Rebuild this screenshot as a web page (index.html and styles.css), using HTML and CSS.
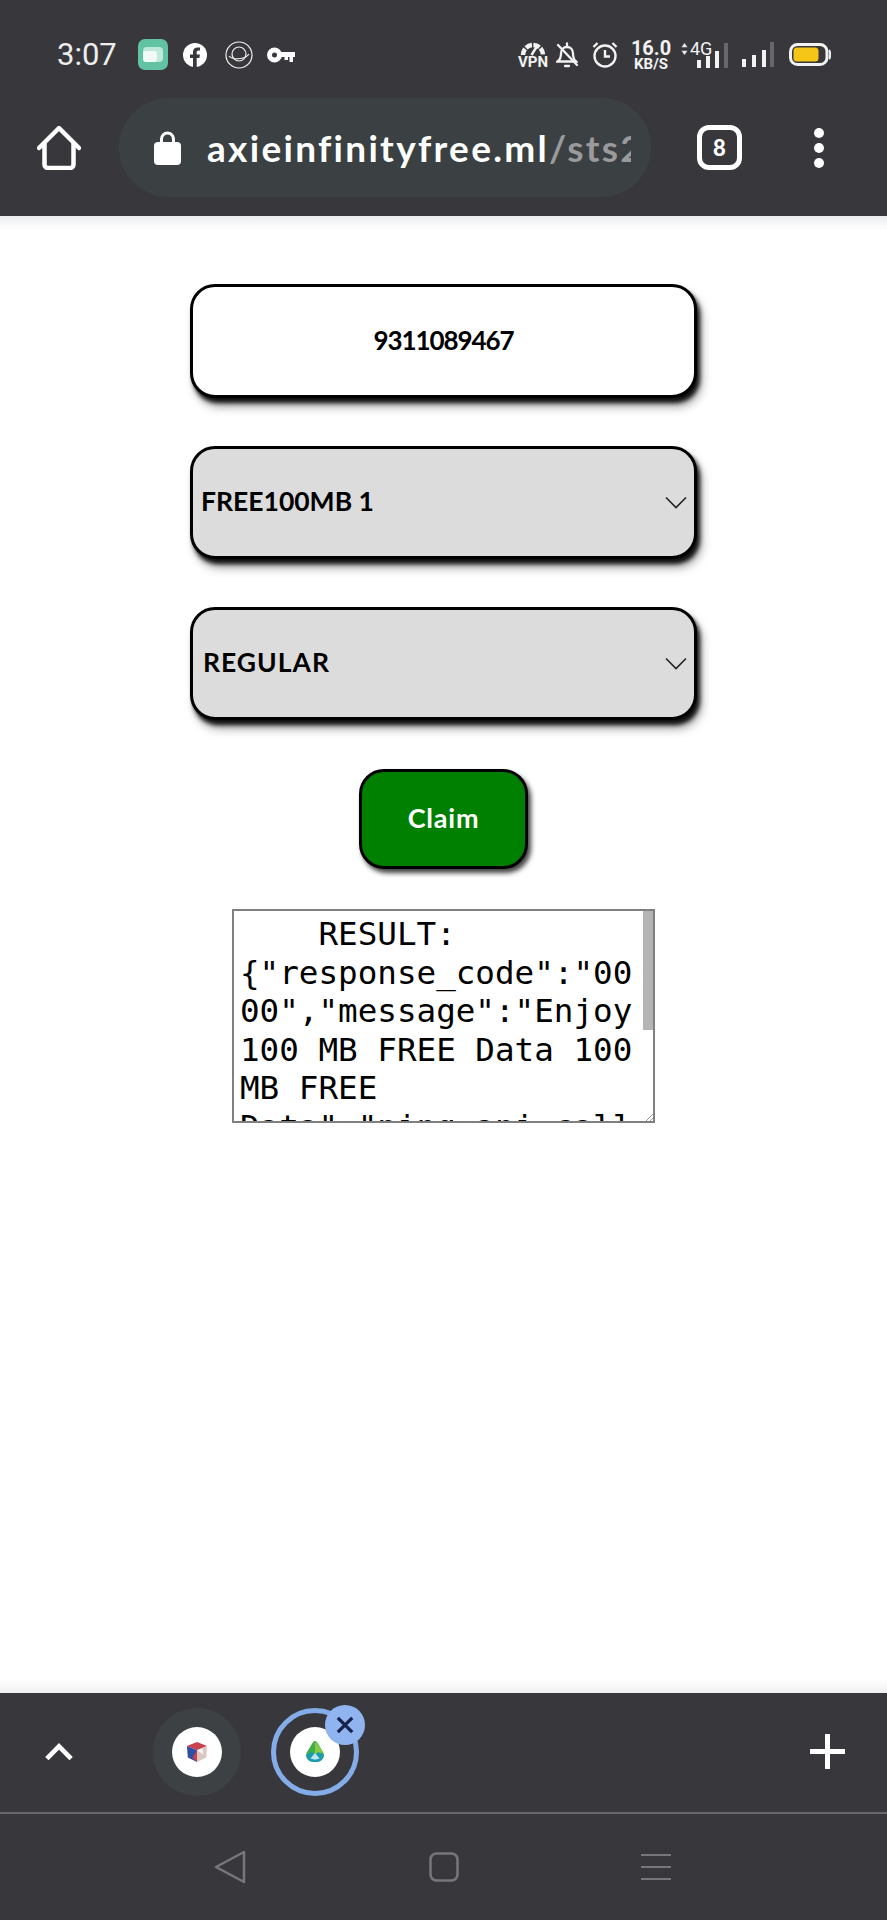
FILE: index.html
```html
<!DOCTYPE html>
<html lang="en">
<head>
<meta charset="utf-8">
<title>Claim</title>
<link rel="stylesheet" href="styles.css">
</head>
<body>
<div class="screen">
  <header class="chrome">
    <div class="status">
      <div class="status-left">
        <span class="time">3:07</span>
        <svg class="ic-msg" viewBox="0 0 30 31"><rect width="30" height="31" rx="7" fill="#62c3a2"/><rect x="5" y="8" width="20" height="15" rx="4" fill="#bfe9da"/><rect x="5" y="12" width="14" height="11" rx="3" fill="#f2fbf8"/></svg>
        <svg class="ic-fb" viewBox="0 0 24 24"><circle cx="12" cy="12" r="12" fill="#fff"/><path d="M10 24v-9H7v-3.500h3V9c0-3 1.800-4.600 4.500-4.600 1.200 0 2.500.2 2.500.2v3h-1.500c-1.400 0-1.800.9-1.800 1.800v2.100h3.200l-.5 3.500h-2.700v9z" fill="#38383c"/></svg>
        <svg class="ic-planet" viewBox="0 0 28 28" fill="none" stroke="#f2f2f2" stroke-width="1.200"><circle cx="14" cy="14" r="13"/><circle cx="14" cy="13" r="7"/><path d="M4 15c3 4 16 4 20-2"/></svg>
        <svg class="ic-key" viewBox="0 0 28 16"><circle cx="7.500" cy="8" r="5" fill="none" stroke="#fff" stroke-width="5"/><path d="M12 5h16v5h-2v5h-3.500v-5h-1.500v3h-3.500v-3H12z" fill="#fff"/></svg>
      </div>
      <div class="status-right">
        <div class="vpn">
          <svg class="ic-gauge" viewBox="0 0 26 15" fill="none" stroke="#f2f2f2"><path d="M3 14a10 10 0 0 1 20 0" stroke-width="4.500" stroke-dasharray="6.500 1.500"/><path d="M11.500 14l5-8" stroke-width="2.500"/></svg>
          <span class="vpn-label">VPN</span>
        </div>
        <svg class="ic-bell" viewBox="0 0 22 26" fill="none" stroke="#f2f2f2" stroke-width="2.300"><path d="M1.500 19.500c3-2 3.500-4 3.500-8 0-4 2.500-6.500 6-6.500s6 2.500 6 6.500c0 4 .5 6 3 8z"/><path d="M11 1.500v3M9 24h4M2 3l19 20" stroke-linecap="round"/></svg>
        <svg class="ic-alarm" viewBox="0 0 26 27" fill="none" stroke="#f2f2f2" stroke-width="2.400"><circle cx="13" cy="15" r="10.500"/><path d="M13 9v6.500h5M1.500 6l4-4M24.500 6l-4-4"/></svg>
        <div class="speed"><span class="speed-num">16.0</span><span class="speed-unit">KB/S</span></div>
        <div class="net">
          <span class="net-label"><svg class="ic-updown" viewBox="0 0 7 14"><path d="M3.500 0l3.500 5H0zM3.500 14L0 9h7z" fill="#e8e8e8"/></svg>4G</span>
          <svg class="ic-sig1" viewBox="0 0 31 25"><rect y="17" width="4" height="8" fill="#f2f2f2"/><rect x="9" y="13" width="4" height="12" fill="#f2f2f2"/><rect x="18" y="8" width="4" height="17" fill="#f2f2f2"/><rect x="27" width="4" height="25" fill="#68686c"/></svg>
        </div>
        <svg class="ic-sig2" viewBox="0 0 32 25"><rect y="17" width="4" height="8" fill="#f2f2f2"/><rect x="10" y="13" width="4" height="12" fill="#f2f2f2"/><rect x="20" y="8" width="4" height="17" fill="#f2f2f2"/><rect x="28" width="4" height="25" fill="#68686c"/></svg>
        <svg class="ic-batt" viewBox="0 0 42 23"><rect x="1.500" y="1.500" width="36.500" height="20" rx="7" fill="none" stroke="#f2f2f2" stroke-width="3"/><rect x="4.500" y="4.500" width="25" height="14" rx="3.500" fill="#f5c518"/><path d="M40 7c1.500 1 1.500 8 0 9" fill="none" stroke="#f2f2f2" stroke-width="2"/></svg>
      </div>
    </div>
    <div class="toolbar">
      <svg class="ic-home" viewBox="0 0 44 44" fill="none" stroke="#fff" stroke-width="4.500" stroke-linejoin="round" stroke-linecap="round"><path d="M2 22L22 2l20 20"/><path d="M7.500 18v20.500a3.500 3.500 0 0 0 3.500 3.500h22a3.500 3.500 0 0 0 3.500-3.500V18"/></svg>
      <div class="omnibox">
        <svg class="ic-lock" viewBox="0 0 27 35"><path d="M7.500 15V9a6 6 0 0 1 12 0v6" fill="none" stroke="#fff" stroke-width="3"/><rect y="12" width="27" height="23" rx="4" fill="#fff"/></svg>
        <div class="url"><span class="url-host">axieinfinityfree.ml</span><span class="url-path">/sts2a</span></div>
      </div>
      <div class="tabs-count">8</div>
      <div class="kebab"><span class="dot"></span><span class="dot"></span><span class="dot"></span></div>
    </div>
  </header>

  <main class="page">
    <div class="field field-input">9311089467</div>
    <div class="field field-select">
      <span class="sel-text">FREE100MB 1</span>
      <svg class="chev" viewBox="0 0 22 13" fill="none" stroke="#222" stroke-width="1.600"><path d="M1 1.500l10 10 10-10"/></svg>
    </div>
    <div class="field field-select">
      <span class="sel-text sel-wide">REGULAR</span>
      <svg class="chev" viewBox="0 0 22 13" fill="none" stroke="#222" stroke-width="1.600"><path d="M1 1.500l10 10 10-10"/></svg>
    </div>
    <div class="claim">Claim</div>
    <div class="result">
      <div class="result-text">    RESULT:
{"response_code":"0000","message":"Enjoy 100 MB FREE Data 100 MB FREE Data","ping_api_call":"ok"}</div>
      <span class="thumb"></span>
      <svg class="grip" viewBox="0 0 8 8" fill="none" stroke="#999" stroke-width="1"><path d="M8 1L1 8M8 5L5 8"/></svg>
    </div>
  </main>

  <footer class="bottom">
    <div class="tabstrip">
      <svg class="ic-up" viewBox="0 0 30 18" fill="none" stroke="#fff" stroke-width="5"><path d="M2 16L15 3l13 13"/></svg>
      <div class="tab-item tab-idle">
        <span class="favicon"><svg class="fav" viewBox="0 0 24 24"><path d="M12 1l11 4.500L12 10 1 5.500z" fill="#c8434f"/><path d="M1 5.500L12 10v13L2 18z" fill="#2f4fa3"/><path d="M23 5.500L12 10v13l10-5z" fill="#d9c7c2"/><path d="M12 10l-5 8 5 5z" fill="#c8434f"/><path d="M12 10l6-2 1 7z" fill="#f4f4f6"/></svg></span>
      </div>
      <div class="tab-item tab-active">
        <span class="favicon"><svg class="fav" viewBox="0 0 24 24"><path d="M12 0c1 0 1.800.6 2.400 1.500l6.600 11c2.200 4.500-.5 10.500-9 10.500S.8 17 3 12.500l6.600-11C10.200.6 11 0 12 0z" fill="#3fae49"/><path d="M12 0l9 12.500-9 1.500z" fill="#86cc3f"/><path d="M2.500 15l6-3 3.500 3 3.500-3 6 3c0 5-4 8-9.500 8s-9.500-3-9.500-8z" fill="#1d9ab5"/><path d="M7 19l5-6 5 6-5 1.500z" fill="#bfe6ea"/></svg></span>
        <span class="tab-close"><svg class="ic-x" viewBox="0 0 20 20" fill="none" stroke="#16224a" stroke-width="3.600"><path d="M2 2l16 16M18 2L2 18"/></svg></span>
      </div>
      <svg class="ic-plus" viewBox="0 0 35 35"><path d="M15 0h5v15h15v5H20v15h-5V20H0v-5h15z" fill="#fff"/></svg>
    </div>
    <nav class="navbar">
      <svg class="ic-back" viewBox="0 0 32 34" fill="none" stroke="#77777b" stroke-width="2.500" stroke-linejoin="round"><path d="M30 2v30L2 17z"/></svg>
      <svg class="ic-square" viewBox="0 0 30 30" fill="none" stroke="#77777b" stroke-width="2.500"><rect x="1.500" y="1.500" width="27" height="27" rx="6"/></svg>
      <div class="ic-menu"><span class="bar"></span><span class="bar"></span><span class="bar"></span></div>
    </nav>
  </footer>
</div>
</body>
</html>
```
FILE: styles.css
```css
* { box-sizing: border-box; }
html, body { margin: 0; padding: 0; background: #fff; }
body { font-family: "Lato", "Liberation Sans", sans-serif; }
svg { display: block; flex: none; }

.screen { width: 887px; height: 1920px; display: flex; flex-direction: column; overflow: hidden; }

/* browser chrome */
.chrome { height: 216px; flex: none; background: #38383c; display: flex; flex-direction: column; }
.status { height: 98px; padding: 28px 56px 0 57px; display: flex; justify-content: space-between; align-items: flex-start; color: #f2f2f2; }
.status-left { display: flex; align-items: center; height: 50px; padding-top: 3px; }
.time { font-family: "Roboto", sans-serif; font-size: 31px; width: 81px; color: #eee; }
.ic-msg { width: 30px; height: 31px; margin-right: 15px; }
.ic-fb { width: 24px; height: 24px; margin-right: 18px; }
.ic-planet { width: 28px; height: 28px; margin-right: 14px; }
.ic-key { width: 28px; height: 16px; }

.status-right { display: flex; align-items: center; height: 50px; padding-top: 3px; }
.vpn { width: 28px; margin-right: 9px; display: flex; flex-direction: column; align-items: center; }
.ic-gauge { width: 26px; height: 15px; }
.vpn-label { font-family: "Roboto", sans-serif; font-size: 15px; font-weight: 700; line-height: 13px; }
.ic-bell { width: 22px; height: 26px; margin-right: 14px; }
.ic-alarm { width: 26px; height: 27px; margin-right: 13px; }
.speed { width: 40px; margin-right: 10px; display: flex; flex-direction: column; align-items: center; font-family: "Roboto", sans-serif; font-weight: 700; }
.speed-num { font-size: 20px; line-height: 20px; }
.speed-unit { font-size: 15px; line-height: 13px; }
.net { position: relative; width: 47px; height: 27px; margin-right: 14px; display: flex; justify-content: flex-end; align-items: flex-end; }
.net-label { position: absolute; left: 0; top: -1px; display: flex; align-items: center; gap: 2px; font-family: "Roboto", sans-serif; font-size: 18px; line-height: 18px; }
.ic-updown { width: 7px; height: 12px; }
.ic-sig1 { width: 31px; height: 25px; }
.ic-sig2 { width: 32px; height: 25px; margin-right: 15px; }
.ic-batt { width: 42px; height: 23px; }

.toolbar { flex: 1; display: flex; align-items: flex-start; padding-left: 37px; }
.ic-home { width: 44px; height: 44px; margin: 28px 38px 0 0; }
.omnibox { width: 532px; height: 99px; border-radius: 50px; background: #3b4042; display: flex; align-items: center; padding-left: 35px; }
.ic-lock { width: 27px; height: 35px; margin-right: 26px; }
.url { width: 424px; overflow: hidden; white-space: nowrap; font-size: 37px; font-weight: 700; letter-spacing: 2.300px; line-height: 44px; }
.url-host { color: #fff; }
.url-path { color: #9a9a9c; }
.tabs-count { width: 45px; height: 45px; margin: 27px 0 0 46px; border: 5px solid #fff; border-radius: 12px; color: #fff; font-size: 22px; font-weight: 900; display: flex; align-items: center; justify-content: center; }
.kebab { margin: 30px 0 0 72px; width: 10px; display: flex; flex-direction: column; gap: 5px; }
.dot { width: 10px; height: 10px; border-radius: 50%; background: #fff; }

/* page */
.page { flex: 1; background: linear-gradient(#eaebed, #fbfbfc 10px, #fff 16px) top / 100% 16px no-repeat, linear-gradient(#fff, #f0f0f2) bottom / 100% 14px no-repeat, #fff; display: flex; flex-direction: column; align-items: center; padding-top: 68px; position: relative; }
.field { width: 507px; height: 113px; margin-bottom: 48px; border: 3px solid #000; border-radius: 25px; box-shadow: 3px 5px 4px rgba(0, 0, 0, .9), 5px 9px 10px rgba(0, 0, 0, .35); color: #000; font-size: 26px; font-weight: 700; display: flex; align-items: center; }
.field-input { height: 114px; background: #fff; justify-content: center; letter-spacing: -1.100px; padding-bottom: 2px; }
.field-select { background: #dcdcdc; justify-content: space-between; padding: 0 7px 4px 8px; }
.sel-text { font-size: 26.500px; }
.sel-wide { letter-spacing: 1px; padding-left: 2px; }
.chev { width: 22px; height: 13px; margin-top: 4px; }
.claim { width: 169px; height: 100px; margin-top: 1px; padding-bottom: 3px; background: #008000; border: 3px solid #000; border-radius: 25px; box-shadow: 3px 4px 5px rgba(0, 0, 0, .75); color: #fff; font-size: 27px; font-weight: 700; letter-spacing: .800px; display: flex; align-items: center; justify-content: center; }
.result { position: relative; width: 423px; height: 214px; margin-top: 40px; border: 2px solid #808080; overflow: hidden; padding: 4px 20px 0 6px; background: #fff; }
.result-text { font-family: "DejaVu Sans Mono", monospace; font-size: 32.600px; line-height: 38.600px; color: #000; white-space: pre-wrap; overflow-wrap: break-word; }
.thumb { position: absolute; right: 0; top: 0; width: 10px; height: 119px; background: #b4b4b4; }
.grip { position: absolute; right: 0; bottom: 0; width: 8px; height: 8px; }

/* bottom */
.bottom { height: 227px; flex: none; background: #38383c; display: flex; flex-direction: column; }
.tabstrip { position: relative; height: 121px; border-bottom: 2px solid #69696d; display: flex; align-items: flex-start; padding-left: 45px; }
.ic-up { width: 28px; height: 18px; margin: 50px 80px 0 0; }
.tab-item { position: relative; width: 88px; height: 88px; margin-top: 15px; border-radius: 50%; display: flex; align-items: center; justify-content: center; }
.tab-idle { background: #3d4143; margin-right: 30px; }
.tab-active { border: 5px solid #83ace8; }
.favicon { width: 50px; height: 50px; border-radius: 50%; background: #fff; display: flex; align-items: center; justify-content: center; }
.fav { width: 22px; height: 22px; }
.tab-close { position: absolute; right: -11px; top: -8px; width: 40px; height: 40px; border-radius: 50%; background: #8fb4f0; display: flex; align-items: center; justify-content: center; }
.ic-x { width: 18px; height: 18px; }
.ic-plus { position: absolute; left: 810px; top: 41px; width: 35px; height: 35px; }
.navbar { flex: 1; display: flex; align-items: center; padding: 0 0 0 214px; }
.ic-back { width: 32px; height: 34px; margin-right: 183px; }
.ic-square { width: 30px; height: 30px; margin-right: 182px; }
.ic-menu { width: 30px; display: flex; flex-direction: column; gap: 10px; }
.bar { height: 2px; background: #77777b; }
```
